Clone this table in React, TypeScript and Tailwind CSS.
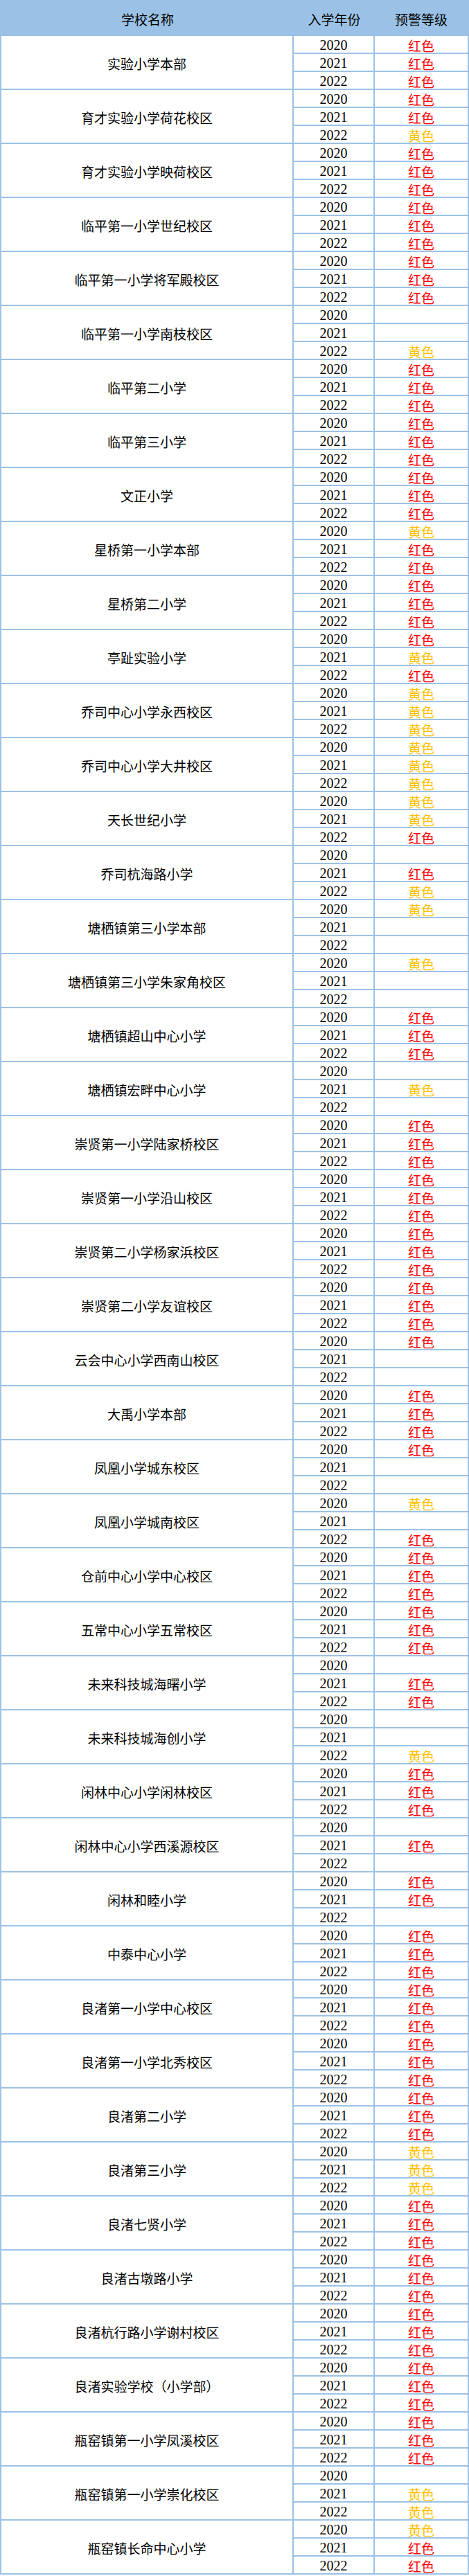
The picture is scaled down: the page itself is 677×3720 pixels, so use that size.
import React from "react";

// R = 红色, Y = 黄色, - = 空
const schools: [string, string][] = [
  ["实验小学本部", "RRR"],
  ["育才实验小学荷花校区", "RRY"],
  ["育才实验小学映荷校区", "RRR"],
  ["临平第一小学世纪校区", "RRR"],
  ["临平第一小学将军殿校区", "RRR"],
  ["临平第一小学南枝校区", "--Y"],
  ["临平第二小学", "RRR"],
  ["临平第三小学", "RRR"],
  ["文正小学", "RRR"],
  ["星桥第一小学本部", "YRR"],
  ["星桥第二小学", "RRR"],
  ["亭趾实验小学", "RYR"],
  ["乔司中心小学永西校区", "YYY"],
  ["乔司中心小学大井校区", "YYY"],
  ["天长世纪小学", "YYR"],
  ["乔司杭海路小学", "-RY"],
  ["塘栖镇第三小学本部", "Y--"],
  ["塘栖镇第三小学朱家角校区", "Y--"],
  ["塘栖镇超山中心小学", "RRR"],
  ["塘栖镇宏畔中心小学", "-Y-"],
  ["崇贤第一小学陆家桥校区", "RRR"],
  ["崇贤第一小学沿山校区", "RRR"],
  ["崇贤第二小学杨家浜校区", "RRR"],
  ["崇贤第二小学友谊校区", "RRR"],
  ["云会中心小学西南山校区", "R--"],
  ["大禹小学本部", "RRR"],
  ["凤凰小学城东校区", "R--"],
  ["凤凰小学城南校区", "Y-R"],
  ["仓前中心小学中心校区", "RRR"],
  ["五常中心小学五常校区", "RRR"],
  ["未来科技城海曙小学", "-RR"],
  ["未来科技城海创小学", "--Y"],
  ["闲林中心小学闲林校区", "RRR"],
  ["闲林中心小学西溪源校区", "-R-"],
  ["闲林和睦小学", "RR-"],
  ["中泰中心小学", "RRR"],
  ["良渚第一小学中心校区", "RRR"],
  ["良渚第一小学北秀校区", "RRR"],
  ["良渚第二小学", "RRR"],
  ["良渚第三小学", "YYY"],
  ["良渚七贤小学", "RRR"],
  ["良渚古墩路小学", "RRR"],
  ["良渚杭行路小学谢村校区", "RRR"],
  ["良渚实验学校（小学部）", "RRR"],
  ["瓶窑镇第一小学凤溪校区", "RRR"],
  ["瓶窑镇第一小学崇化校区", "-YY"],
  ["瓶窑镇长命中心小学", "YRR"],
];

const years = ["2020", "2021", "2022"];

function Level({ code }: { code: string }) {
  if (code === "R") return <span className="text-[#ff0000]">红色</span>;
  if (code === "Y") return <span className="text-[#ffc000]">黄色</span>;
  return null;
}

export default function App() {
  return (
    <div
      className="w-[677px] bg-white text-[19px] leading-none text-black border-l-2 border-r-2 border-[#9BC2E6]"
      style={{ fontFamily: '"Noto Sans CJK SC", sans-serif' }}
    >
      <div className="flex h-[52px] bg-[#9BC2E6]">
        <div className="w-[422px] flex items-center justify-center pt-[2px]">学校名称</div>
        <div className="w-[117px] flex items-center justify-center pt-[2px]">入学年份</div>
        <div className="flex-1 flex items-center justify-center pt-[2px]">预警等级</div>
      </div>

      {schools.map(([name, levels]) => (
        <div key={name} className="flex h-[78px] border-b-2 border-[#9BC2E6]">
          <div className="w-[422px] border-r-2 border-[#9BC2E6] flex items-center justify-center pt-[3px]">
            {name}
          </div>
          <div className="flex-1 flex flex-col">
            {years.map((year, i) => (
              <div
                key={year}
                className={
                  i < 2
                    ? "flex h-[26px] border-b-2 border-[#9BC2E6]"
                    : "flex h-[24px]"
                }
              >
                <div
                  className="w-[117px] border-r-2 border-[#9BC2E6] flex items-center justify-center pt-[2px] text-[20px]"
                  style={{ fontFamily: '"Liberation Serif", serif' }}
                >
                  {year}
                </div>
                <div className="flex-1 flex items-center justify-center pt-[2px]">
                  <Level code={levels[i]} />
                </div>
              </div>
            ))}
          </div>
        </div>
      ))}
    </div>
  );
}
